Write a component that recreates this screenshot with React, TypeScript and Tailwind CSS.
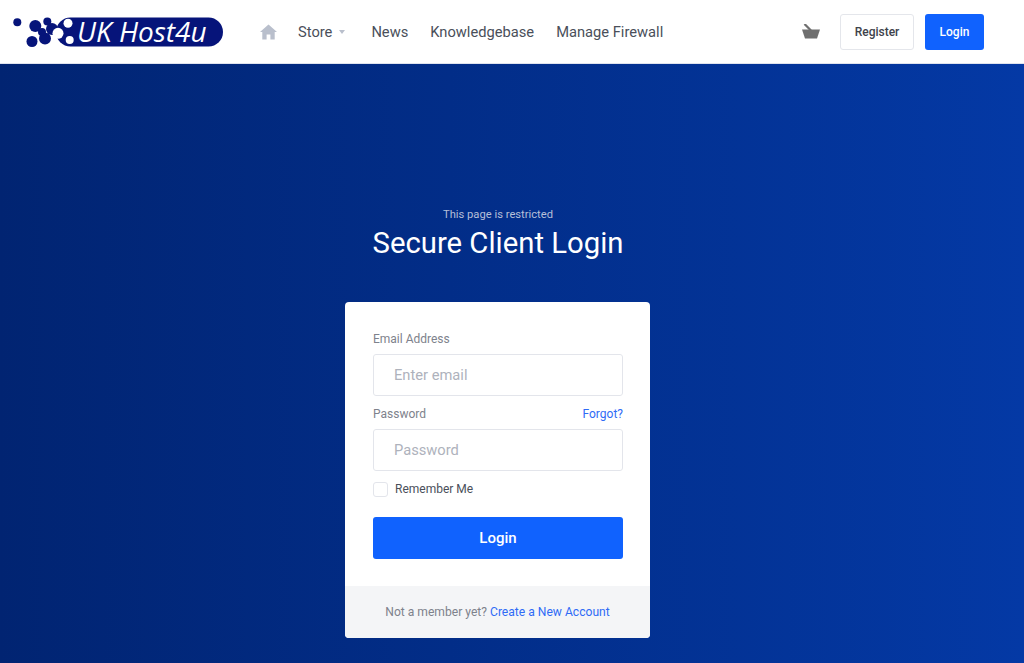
function Logo() {
  return (
    <div className="relative w-[212px] h-[34px] ml-[12px] shrink-0">
      <svg className="absolute left-0 top-0" width="212" height="34" viewBox="0 0 212 34">
        <rect x="44" y="2.5" width="167" height="29" rx="14.5" fill="#06147a" />
        <circle cx="5.3" cy="7.3" r="4" fill="#06147a" />
        <circle cx="23.3" cy="11" r="6" fill="#06147a" />
        <circle cx="20" cy="26.5" r="5.5" fill="#06147a" />
        <circle cx="35.3" cy="6.5" r="4" fill="#06147a" />
        <circle cx="33" cy="23.5" r="6" fill="#06147a" />
        <circle cx="30" cy="17" r="4" fill="#06147a" />
        <circle cx="40" cy="14" r="6" fill="#06147a" />
        <circle cx="56" cy="8.3" r="4.5" fill="#fff" />
        <circle cx="46" cy="18.3" r="5.5" fill="#fff" />
        <circle cx="57.7" cy="25" r="4" fill="#fff" />
      </svg>
      <span className="absolute left-[65px] top-[-2px] text-[28px] leading-[36px] italic text-white whitespace-nowrap font-['Open_Sans',sans-serif]">
        UK Host4u
      </span>
    </div>
  );
}

function Header() {
  return (
    <header className="flex items-center h-[64px] bg-white border-b border-[#dfe3ee] pr-[40px]">
      <Logo />
      <nav className="flex items-center ml-[36px] pt-[1px] text-[14.7px] text-[#4a4f5a]">
        <svg className="mr-[21px]" width="17" height="16" viewBox="0 0 17 16" fill="#b9bfcc">
          <path d="M8.5 0.5 L17 8 L14.7 8 L14.7 15.5 L10.4 15.5 L10.4 10.5 L6.6 10.5 L6.6 15.5 L2.3 15.5 L2.3 8 L0 8 Z" />
        </svg>
        <span>Store</span>
        <span className="ml-[7px] mr-[26px] w-0 h-0 border-x-[3.5px] border-x-transparent border-t-[4px] border-t-[#b9bfcc]" />
        <span className="mr-[22px]">News</span>
        <span className="mr-[22px]">Knowledgebase</span>
        <span>Manage Firewall</span>
      </nav>
      <div className="flex items-center ml-auto">
        <svg className="mr-[20px]" width="18" height="15" viewBox="0 0 18 15" fill="#6f6f6f">
          <path d="M0 5.5 H18 L15 14.5 H3 Z" />
          <path d="M2.5 0 L9 6.5" stroke="#6f6f6f" strokeWidth="2.2" />
        </svg>
        <button className="w-[74px] h-[36px] rounded-[3px] border border-[#e4e6eb] bg-white text-[12px] font-medium text-[#3e424b]">
          Register
        </button>
        <button className="w-[59px] h-[36px] ml-[11px] rounded-[3px] bg-[#1062fe] text-[12px] font-medium text-white">
          Login
        </button>
      </div>
    </header>
  );
}

function Field({ placeholder }: { placeholder: string }) {
  return (
    <input
      placeholder={placeholder}
      className="block w-full h-[42px] px-[20px] rounded-[3px] border border-[#e3e5eb] bg-white text-[14.7px] outline-none placeholder:text-[#aeb2bc]"
    />
  );
}

export default function App() {
  return (
    <div className="h-[663px] overflow-hidden font-['Roboto',sans-serif] bg-gradient-to-r from-[#012472] to-[#0439a5]">
      <Header />
      <main className="flex flex-col items-center pt-[144px] pr-[29px]">
        <p className="ml-[1px] text-[11.2px] leading-[13px] text-[#b5bfd8]">This page is restricted</p>
        <h1 className="ml-[1px] mt-[4px] text-[29.3px] leading-[36px] text-white">Secure Client Login</h1>
        <div className="w-[305px] mt-[41px] rounded-[4px] bg-white overflow-hidden">
          <form className="pl-[28px] pr-[27px] pt-[29px] pb-[27px]">
            <label className="block text-[12px] leading-[16px] text-[#7e828c] mb-[7px]">Email Address</label>
            <Field placeholder="Enter email" />
            <div className="flex justify-between mt-[11px] mb-[7px] text-[12px] leading-[15px]">
              <label className="text-[#7e828c]">Password</label>
              <a className="text-[#2f6bf6]">Forgot?</a>
            </div>
            <Field placeholder="Password" />
            <label className="flex items-center mt-[10px] text-[12px] leading-[16px] text-[#4a4f5a]">
              <span className="w-[15px] h-[15px] mr-[7px] rounded-[3px] border border-[#e3e5eb]" />
              Remember Me
            </label>
            <button type="button" className="block w-full h-[42px] mt-[20px] rounded-[3px] bg-[#1062fe] text-[15px] font-medium text-white">
              Login
            </button>
          </form>
          <div className="flex items-center justify-center h-[52px] bg-[#f4f5f7] text-[12.1px] text-[#7e828c]">
            Not a member yet?&nbsp;<a className="text-[#2f6bf6]">Create a New Account</a>
          </div>
        </div>
      </main>
    </div>
  );
}
